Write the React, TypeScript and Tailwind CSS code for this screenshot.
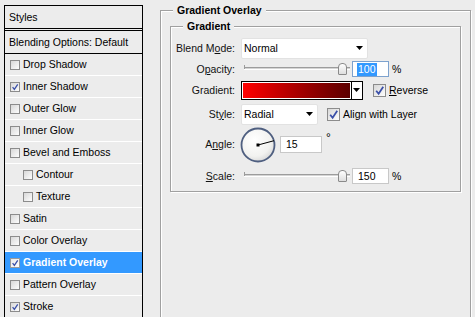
import React from "react";

const font = { fontFamily: '"Liberation Sans", Arial, sans-serif' };

function Check({ checked, size = 10, className = "" }: { checked?: boolean; size?: number; className?: string }) {
  return (
    <div
      className={"relative shrink-0 border border-[#8c8c8c] bg-gradient-to-br from-[#d8d8d8] to-[#fdfdfd] " + className}
      style={{ width: size, height: size }}
    >
      {checked && (
        <svg className="absolute inset-0" width={size - 2} height={size - 2} viewBox="0 0 10 10">
          <path d="M2 5.2 L4.2 8 L8.4 1.6" fill="none" stroke="#3a4fa8" strokeWidth="1.6" />
        </svg>
      )}
    </div>
  );
}

function Row({ label, checked, indent, active }: { label: string; checked?: boolean; indent?: boolean; active?: boolean }) {
  return (
    <div
      className={
        "flex h-[22px] items-center border-b border-white " +
        (indent ? "pl-[18px] " : "pl-[5px] ") +
        (active ? "bg-[#3399ff] text-white font-bold" : "text-black")
      }
    >
      <Check checked={checked} className={active ? "border-[#9a9a9a] from-[#e8e8e8] to-white" : ""} />
      <span className="ml-[3px]">{label}</span>
    </div>
  );
}

function Arrow() {
  return (
    <svg width="8" height="5" viewBox="0 0 8 5">
      <path d="M0 0 H7 L3.5 4 Z" fill="#000" />
    </svg>
  );
}

function Slider() {
  return (
    <div className="relative h-[16px] w-[109px]">
      <div className="absolute left-[3px] right-0 top-[6px] h-[3px] border-t border-[#9c9c9c] border-b border-b-white bg-[#d4d4d4]" />
      <div className="absolute left-[3px] top-[4px] h-[4px] w-px bg-[#9c9c9c]" />
      <div className="absolute left-[97px] top-[2px] h-[12px] w-[9px] rounded-t-[4px] rounded-b-[1px] border border-[#8a8a8a] bg-gradient-to-b from-white to-[#dedede]" />
    </div>
  );
}

function GroupBox({ title, className, children }: { title: string; className: string; children?: React.ReactNode }) {
  return (
    <div className={"relative border border-[#a0a0a0] shadow-[inset_1px_1px_0_#fff,1px_1px_0_#fff] " + className}>
      <span className="absolute -top-[8px] left-[12px] bg-[#ececec] px-[4px] font-bold leading-[14px] text-black">{title}</span>
      {children}
    </div>
  );
}

export default function App() {
  const labelCls = "w-[65px] shrink-0 text-right pr-px text-[#111]";
  return (
    <div className="flex h-[317px] w-[475px] overflow-hidden bg-[#ececec] text-[10.5px] leading-[13px]" style={font}>
      {/* Left list */}
      <div className="ml-[4px] mt-[5px] h-[330px] w-[139px] shrink-0 border-l border-r border-t border-black">
        <div className="flex h-[25px] items-center border-b-[3px] border-double border-black pl-[4px] text-black">Styles</div>
        <div className="flex h-[23px] items-center border-b border-black pl-[4px] text-black">Blending Options: Default</div>
        <Row label="Drop Shadow" />
        <Row label="Inner Shadow" checked />
        <Row label="Outer Glow" />
        <Row label="Inner Glow" />
        <Row label="Bevel and Emboss" />
        <Row label="Contour" indent />
        <Row label="Texture" indent />
        <Row label="Satin" />
        <Row label="Color Overlay" />
        <Row label="Gradient Overlay" checked active />
        <Row label="Pattern Overlay" />
        <Row label="Stroke" checked />
      </div>

      {/* Right panel */}
      <GroupBox title="Gradient Overlay" className="ml-[17px] mt-[10px] h-[330px] w-[311px] shrink-0">
        <GroupBox title="Gradient" className="ml-[9px] mt-[15px] h-[166px] w-[291px]">
          <div className="flex flex-col">
            {/* Blend Mode */}
            <div className="mt-[10px] flex h-[22px] items-center">
              <div className={labelCls}>
                Blend M<u className="underline-offset-1">o</u>de:
              </div>
              <div className="ml-[5px] flex h-[21px] w-[127px] items-center justify-between rounded-[2px] border border-[#e2e2e2] bg-white pl-[2px] pr-[3px] text-black">
                <span>Normal</span>
                <Arrow />
              </div>
            </div>
            {/* Opacity */}
            <div className="flex h-[20px] items-center">
              <div className={labelCls}>
                O<u className="underline-offset-1">p</u>acity:
              </div>
              <div className="ml-[5px]">
                <Slider />
              </div>
              <div className="ml-[2px] flex h-[16px] w-[37px] items-center border border-[#7da2ce] bg-white pl-[4px]">
                <span className="bg-[#3399ff] px-px text-white">100</span>
              </div>
              <span className="ml-[3px] text-black">%</span>
            </div>
            {/* Gradient */}
            <div className="flex h-[22px] items-center">
              <div className={labelCls}>Gradient:</div>
              <div className="ml-[5px] flex h-[19px] w-[122px] border border-black bg-white">
                <div className="m-px flex-1 bg-gradient-to-r from-[#ff0000] to-[#5c0000]" />
                <div className="flex w-[11px] items-center justify-center border-l border-black bg-white">
                  <Arrow />
                </div>
              </div>
              <Check checked size={13} className="ml-[10px] border-[#8c8c8c]" />
              <span className="ml-[3px] text-black">
                <u className="underline-offset-1">R</u>everse
              </span>
            </div>
            {/* Style */}
            <div className="mt-[2px] flex h-[22px] items-center">
              <div className={labelCls}>
                St<u className="underline-offset-1">y</u>le:
              </div>
              <div className="ml-[5px] flex h-[21px] w-[77px] items-center justify-between rounded-[2px] border border-[#e2e2e2] bg-white pl-[2px] pr-[3px] text-black">
                <span>Radial</span>
                <Arrow />
              </div>
              <Check checked size={13} className="ml-[9px]" />
              <span className="ml-[3px] text-black">Align with Layer</span>
            </div>
            {/* Angle */}
            <div className="mt-[2px] flex h-[35px] items-center">
              <div className={labelCls}>
                A<u className="underline-offset-1">n</u>gle:
              </div>
              <div className="ml-[4px] shrink-0">
                <svg width="36" height="36" viewBox="0 0 36 36">
                  <defs>
                    <radialGradient id="dial" cx="0.4" cy="0.35" r="0.7">
                      <stop offset="0" stopColor="#ffffff" />
                      <stop offset="0.7" stopColor="#f2f2f0" />
                      <stop offset="1" stopColor="#d6d6d6" />
                    </radialGradient>
                  </defs>
                  <circle cx="18" cy="18" r="16.5" fill="url(#dial)" stroke="#4f5f80" strokeWidth="1.8" />
                  <line x1="18" y1="18" x2="34" y2="13.7" stroke="#000" strokeWidth="1" />
                  <rect x="16.5" y="16.5" width="3" height="3" fill="#000" />
                </svg>
              </div>
              <div className="ml-[4px] flex h-[17px] w-[42px] items-center border border-[#c8c8c8] bg-white pl-[5px] text-black">15</div>
              <span className="ml-[4px] self-start pt-[5px] text-[12px] text-black">°</span>
            </div>
            {/* Scale */}
            <div className="mt-[4px] flex h-[20px] items-center">
              <div className={labelCls}>
                <u className="underline-offset-1">S</u>cale:
              </div>
              <div className="ml-[5px]">
                <Slider />
              </div>
              <div className="ml-[2px] flex h-[16px] w-[37px] items-center border border-[#c8c8c8] bg-white pl-[5px] text-black">150</div>
              <span className="ml-[3px] text-black">%</span>
            </div>
          </div>
        </GroupBox>
      </GroupBox>
    </div>
  );
}
